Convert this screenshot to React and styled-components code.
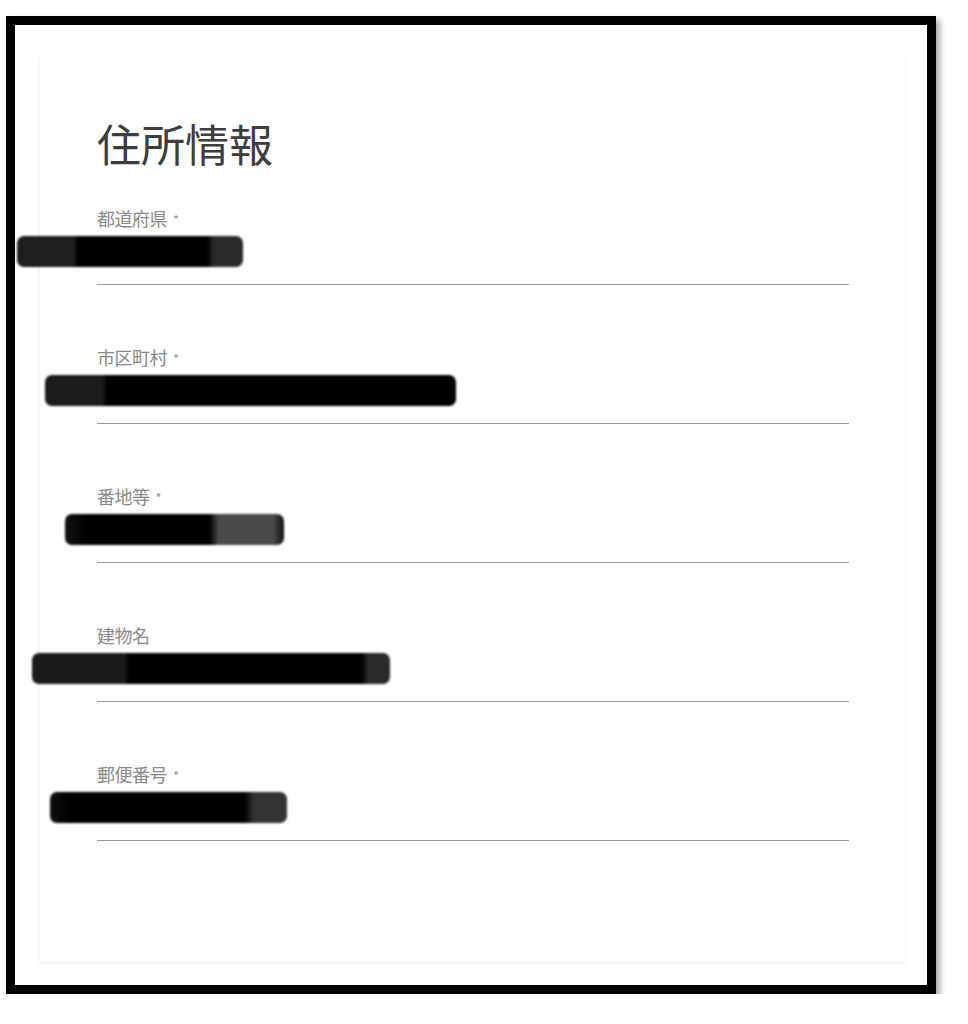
import React from 'react'
import styled, { createGlobalStyle } from 'styled-components'

const GlobalStyle = createGlobalStyle`
    html, body {
        margin: 0;
        padding: 0;
        background: #FFFFFF;
        font-family: "Noto Sans CJK JP", "Noto Sans", sans-serif;
    }
`;

const Frame = styled.div`
    box-sizing: border-box;
    margin: 16px 0 0 6px;
    width: 930px;
    height: 978px;
    border: 9px solid #000000;
    box-shadow: 4px 4px 6px rgba(0, 0, 0, 0.35);
    padding: 33px 22px 23px 25px;
    background: #FFFFFF;
`;

const Card = styled.section`
    box-sizing: border-box;
    height: 100%;
    background: #FEFEFE;
    box-shadow: 0 1px 4px rgba(0, 0, 0, 0.09);
    padding: 55px 56px 0 57px;
`;

const Title = styled.h1`
    margin: 0 0 35px;
    font-size: 44px;
    line-height: 60px;
    font-weight: 400;
    color: #3d3d3d;
`;

const FieldList = styled.div`
    display: flex;
    flex-direction: column;
    gap: 62px;
`;

const Field = styled.div`
    display: flex;
    flex-direction: column;
    border-bottom: 1.5px solid #9a9a9a;
`;

const Label = styled.label`
    display: flex;
    align-items: center;
    height: 20px;
    font-size: 18px;
    line-height: 20px;
    color: #8a8a8a;
    letter-spacing: -0.5px;
`;

const Required = styled.span`
    margin-left: 6px;
    font-size: 13px;
    line-height: 1;
    position: relative;
    top: 1px;
    color: #999;
`;

const ValueRow = styled.div`
    height: 31px;
    margin: 8px 0 17px;
    display: flex;
`;

// redacted value, drawn as a blurred black bar
const Redaction = styled.div`
    height: 31px;
    width: ${p => p.$width}px;
    margin-left: ${p => p.$offset}px;
    border-radius: 7px;
    filter: blur(1px);
    background: ${p => p.$fill};
`;

const fields = [
    {
        label: '都道府県', required: true, offset: -80, width: 226,
        fill: 'linear-gradient(90deg, #1e1e1e 0%, #1e1e1e 25%, #000 27%, #000 84%, #2a2a2a 87%, #2a2a2a 100%)',
    },
    {
        label: '市区町村', required: true, offset: -52, width: 411,
        fill: 'linear-gradient(90deg, #1c1c1c 0%, #1c1c1c 14%, #000 15%, #000 100%)',
    },
    {
        label: '番地等', required: true, offset: -32, width: 219,
        fill: 'linear-gradient(90deg, #111 0%, #000 10%, #000 66%, #4a4a4a 70%, #4a4a4a 95%, #111 100%)',
    },
    {
        label: '建物名', required: false, offset: -65, width: 358,
        fill: 'linear-gradient(90deg, #1a1a1a 0%, #1a1a1a 26%, #000 27%, #000 92%, #2a2a2a 94%, #2a2a2a 100%)',
    },
    {
        label: '郵便番号', required: true, offset: -47, width: 237,
        fill: 'linear-gradient(90deg, #111 0%, #000 8%, #000 82%, #333 86%, #333 100%)',
    },
];

const App = () => {
    return (
        <>
            <GlobalStyle />
            <Frame>
                <Card>
                    <Title>住所情報</Title>
                    <FieldList>
                        {fields.map(f => (
                            <Field key={f.label}>
                                <Label>
                                    {f.label}
                                    {f.required && <Required>*</Required>}
                                </Label>
                                <ValueRow>
                                    <Redaction $offset={f.offset} $width={f.width} $fill={f.fill} />
                                </ValueRow>
                            </Field>
                        ))}
                    </FieldList>
                </Card>
            </Frame>
        </>
    )
}

export default App
